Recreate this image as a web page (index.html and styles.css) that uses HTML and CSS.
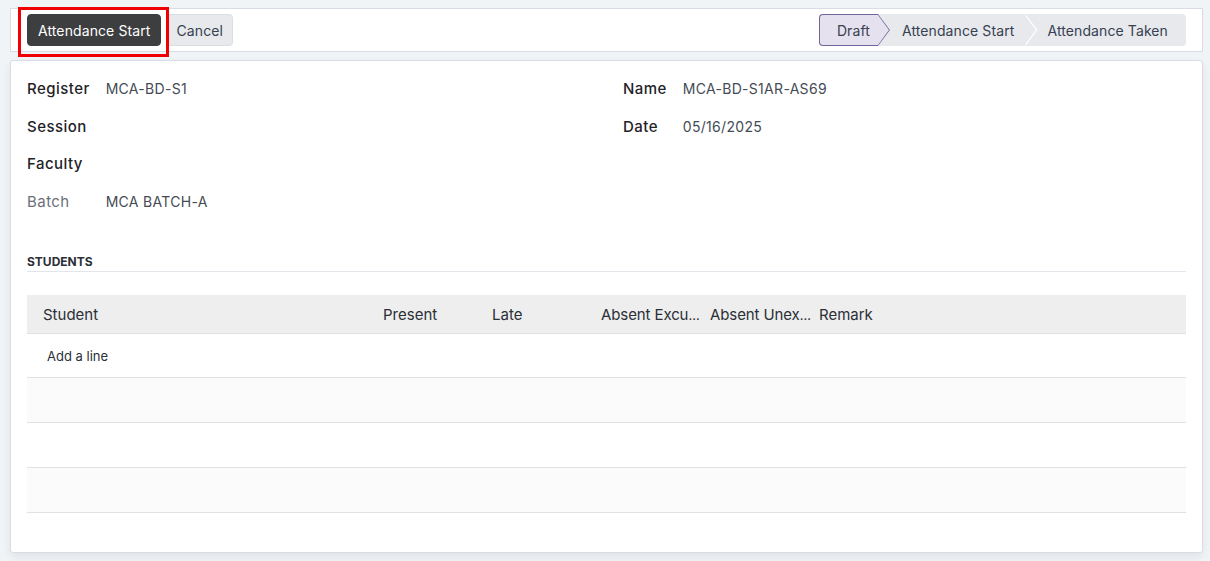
FILE: index.html
```html
<!DOCTYPE html>
<html>
  <head>
    <title>Attendance Sheet</title>
    <link rel="stylesheet" href="styles.css">
  </head>
  <body>
    <div class="control-panel">
      <div class="actions">
        <span class="highlight">
          <button class="btn btn-dark">Attendance Start</button>
        </span>
        <button class="btn btn-light">Cancel</button>
      </div>
      <div class="statusbar">
        <span class="step step-current">Draft</span>
        <span class="step step-mid">Attendance Start</span>
        <span class="step step-last">Attendance Taken</span>
      </div>
    </div>

    <div class="sheet">
      <div class="groups">
        <div class="group">
          <span class="label">Register</span>
          <span class="value">MCA-BD-S1</span>
          <span class="label">Session</span>
          <span class="value"></span>
          <span class="label">Faculty</span>
          <span class="value"></span>
          <span class="label label-muted">Batch</span>
          <span class="value">MCA BATCH-A</span>
        </div>
        <div class="group">
          <span class="label">Name</span>
          <span class="value">MCA-BD-S1AR-AS69</span>
          <span class="label">Date</span>
          <span class="value">05/16/2025</span>
        </div>
      </div>

      <div class="separator">STUDENTS</div>

      <div class="list">
        <div class="list-row list-head">
          <span class="cell cell-first">Student</span>
          <span class="cell">Present</span>
          <span class="cell">Late</span>
          <span class="cell cell-clipped" title="Absent Excused">Absent Excu<span class="dots">…</span></span>
          <span class="cell cell-clipped" title="Absent Unexcused">Absent Unex<span class="dots">…</span></span>
          <span class="cell">Remark</span>
        </div>
        <div class="list-row add-line">
          <span class="add-link">Add a line</span>
        </div>
        <div class="list-row empty odd"></div>
        <div class="list-row empty"></div>
        <div class="list-row empty odd"></div>
      </div>
    </div>
  </body>
</html>
```

FILE: styles.css
```css
body {
  margin: 0;
  padding: 8px 7px 8px 10px;
  background-color: #f0f4f7;
  font-family: Inter, "Noto Sans", sans-serif;
  color: #1f2328;
}

/* top bar with buttons and status */
.control-panel {
  display: flex;
  justify-content: space-between;
  align-items: center;
  background-color: #ffffff;
  border: 1px solid #d8dde3;
  padding: 5px 16px;
}
.actions {
  display: flex;
  gap: 5px;
}
.highlight {
  position: relative;
  display: inline-block;
}
.highlight::after {
  content: "";
  position: absolute;
  top: -7px;
  left: -9px;
  right: -8px;
  bottom: -11px;
  border: 3px solid #f00000;
  pointer-events: none;
}
.btn {
  height: 32px;
  font-family: inherit;
  font-size: 14px;
  letter-spacing: 0.1px;
  border-radius: 4px;
  padding: 0 10px;
  cursor: pointer;
}
.btn-dark {
  background-color: #3d3e3f;
  border: 1px solid #3d3e3f;
  color: #ffffff;
}
.btn-light {
  background-color: #e7e9ed;
  border: 1px solid #dadde2;
  color: #374151;
  padding: 0 9px;
}

.statusbar {
  display: flex;
  height: 32px;
  background-color: #e7e9ed;
  border-radius: 4px;
}
.step {
  position: relative;
  display: flex;
  align-items: center;
  font-size: 14px;
  letter-spacing: 0.1px;
  color: #374151;
}
.step-current::before,
.step-current::after,
.step-mid::before,
.step-mid::after {
  content: "";
  position: absolute;
  width: 12px;
  clip-path: polygon(0 0, 100% 50%, 0 100%);
}
.step-current {
  background-color: #e6e1ef;
  border: 1px solid #71639e;
  border-right: none;
  border-radius: 4px 0 0 4px;
  padding: 0 8px 0 17px;
  z-index: 2;
}
.step-current::before {
  left: 100%;
  top: -1px;
  bottom: -1px;
  background-color: #71639e;
}
.step-current::after {
  left: 100%;
  top: 0;
  bottom: 0;
  width: 11px;
  background-color: #e6e1ef;
}
.step-mid {
  padding: 0 11px 0 24px;
  z-index: 1;
}
.step-mid::before {
  left: 100%;
  top: 0;
  bottom: 0;
  background-color: #ffffff;
}
.step-mid::after {
  left: calc(100% - 1.5px);
  top: 0;
  bottom: 0;
  background-color: #e7e9ed;
}
.step-last {
  padding: 0 18px 0 22px;
}

/* form sheet */
.sheet {
  margin-top: 8px;
  background-color: #ffffff;
  border: 1px solid #d8dde3;
  border-radius: 3px;
  box-shadow: 0 4px 10px rgba(0, 0, 0, 0.07);
  padding: 9px 16px 39px 16px;
}
.groups {
  display: grid;
  grid-template-columns: 596px 1fr;
}
.group {
  display: grid;
  grid-template-columns: max-content 1fr;
  grid-auto-rows: 37.5px;
  column-gap: 16px;
  align-items: center;
  align-content: start;
}
.label {
  font-size: 15px;
  font-weight: 500;
  letter-spacing: 0.45px;
  color: #1f2328;
}
.label-muted {
  font-weight: 400;
  color: #6c7079;
}
.value {
  font-size: 14px;
  letter-spacing: 0.3px;
  color: #454b55;
}

.separator {
  margin-top: 34px;
  font-size: 12px;
  font-weight: 700;
  line-height: 16px;
  color: #2b2f36;
  border-bottom: 1px solid #e2e5e9;
  padding-bottom: 1px;
}

/* students list */
.list {
  margin-top: 23px;
}
.list-row {
  display: grid;
  grid-template-columns: 352px 109px 109px 109px 109px 1fr;
  align-items: center;
  border-bottom: 1px solid #dfe1e5;
}
.list-head {
  height: 38px;
  background-color: #eeeeee;
  font-size: 15px;
  color: #2b2f36;
}
.cell {
  padding: 0 4px;
  white-space: nowrap;
}
.cell-first {
  padding-left: 16px;
}
.cell-clipped {
  letter-spacing: -0.1px;
}
.dots {
  letter-spacing: -1px;
  font-size: 13px;
}
.add-line {
  height: 43px;
}
.add-link {
  grid-column: 1 / 3;
  padding-left: 20px;
  font-size: 13px;
  color: #2b2f36;
}
.empty {
  height: 44px;
}
.odd {
  background-color: #fcfbfb;
}
```
